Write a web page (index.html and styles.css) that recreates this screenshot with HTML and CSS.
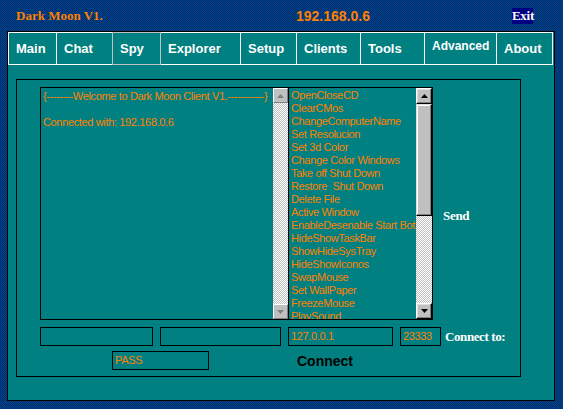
FILE: index.html
```html
<!DOCTYPE html>
<html>
<head>
<meta charset="utf-8">
<title>Dark Moon V1.</title>
<link rel="stylesheet" href="styles.css">
</head>
<body>
<div class="titlebar">
  <div class="app-title">Dark Moon V1.</div>
  <div class="app-ip">192.168.0.6</div>
  <div class="exit">Exit</div>
</div>
<div class="panel">
  <div class="tabs">
    <div class="tab w49">Main</div>
    <div class="tab w57">Chat</div>
    <div class="tab w49 tab-focus">Spy</div>
    <div class="tab w81">Explorer</div>
    <div class="tab w57">Setup</div>
    <div class="tab w65">Clients</div>
    <div class="tab w65">Tools</div>
    <div class="tab w73 tab-small">Advanced</div>
    <div class="tab w57">About</div>
  </div>
  <div class="group">
    <div class="row-main">
      <div class="textbox">
        <div class="textbox-body">
          <div class="line">{--------Welcome to Dark Moon Client V1.-----------}</div>
          <div class="line gap">Connected with: 192.168.0.6</div>
        </div>
        <div class="scroll scroll-disabled">
          <div class="sbtn"><svg width="7" height="4" viewBox="0 0 7 4"><polygon points="3.5,0 7,4 0,4" fill="#808080"/></svg></div>
          <div class="track"></div>
          <div class="sbtn"><svg width="7" height="4" viewBox="0 0 7 4"><polygon points="0,0 7,0 3.5,4" fill="#808080"/></svg></div>
        </div>
      </div>
      <div class="listbox">
        <div class="list-items">
          <div class="item">OpenCloseCD</div>
          <div class="item">ClearCMos</div>
          <div class="item">ChangeComputerName</div>
          <div class="item">Set Resolucion</div>
          <div class="item">Set 3d Color</div>
          <div class="item">Change Color Windows</div>
          <div class="item">Take off Shut Down</div>
          <div class="item">Restore&nbsp; Shut Down</div>
          <div class="item">Delete File</div>
          <div class="item">Active Window</div>
          <div class="item">EnableDesenable Start Botton</div>
          <div class="item">HideShowTaskBar</div>
          <div class="item">ShowHideSysTray</div>
          <div class="item">HideShowIconos</div>
          <div class="item">SwapMouse</div>
          <div class="item">Set WallPaper</div>
          <div class="item">FreezeMouse</div>
          <div class="item">PlaySound</div>
        </div>
        <div class="scroll scroll-list">
          <div class="sbtn sbtn16"><svg width="7" height="4" viewBox="0 0 7 4"><polygon points="3.5,0 7,4 0,4" fill="#000"/></svg></div>
          <div class="thumb"></div>
          <div class="track"></div>
          <div class="sbtn sbtn16"><svg width="7" height="4" viewBox="0 0 7 4"><polygon points="0,0 7,0 3.5,4" fill="#000"/></svg></div>
        </div>
      </div>
      <div class="send">Send</div>
    </div>
    <div class="row-inputs">
      <div class="field w113"></div>
      <div class="field w121"></div>
      <div class="field w105">127.0.0.1</div>
      <div class="field w41">23333</div>
      <div class="connect-to">Connect to:</div>
    </div>
    <div class="row-pass">
      <div class="field w97 pass">PASS</div>
      <div class="connect">Connect</div>
    </div>
  </div>
</div>
</body>
</html>
```
FILE: styles.css
```css
* { box-sizing: border-box; }
html, body { margin: 0; padding: 0; }
body {
  width: 563px;
  height: 409px;
  overflow: hidden;
  background: repeating-conic-gradient(#00418a 0 25%, #002f6e 0 50%) 0 0 / 2px 2px;
  font-family: "Liberation Sans", Arial, sans-serif;
}
.titlebar {
  height: 31px;
  display: flex;
  align-items: center;
  padding-left: 16px;
}
.app-title {
  width: 280px;
  font-family: "Liberation Serif", "Times New Roman", serif;
  font-weight: bold;
  font-size: 13px;
  color: #ff8000;
}
.app-ip {
  width: 216px;
  font-weight: bold;
  font-size: 14px;
  color: #ff8000;
}
.exit {
  width: 21px;
  height: 16px;
  background: #000080;
  color: #fff;
  font-family: "Liberation Serif", "Times New Roman", serif;
  font-weight: bold;
  font-size: 13px;
  line-height: 16px;
  text-align: center;
  letter-spacing: -0.3px;
}
.panel {
  margin-left: 7px;
  width: 548px;
  height: 370px;
  background: #008080;
  border: 1px solid #000;
}
.tabs {
  display: flex;
  height: 33px;
}
.tab {
  height: 33px;
  border: 1px solid #fff;
  margin-left: -1px;
  padding-left: 7px;
  color: #fff;
  font-weight: bold;
  font-size: 13px;
  line-height: 31px;
  white-space: nowrap;
}
.tab:first-child { margin-left: 0; }
.tab-focus {
  border-color: #c0c0c0;
  position: relative;
  z-index: 1;
}
.tab-small {
  font-size: 12px;
  line-height: 27px;
}
.w49 { width: 49px; }
.w57 { width: 57px; }
.w65 { width: 65px; }
.w73 { width: 73px; }
.w81 { width: 81px; }
.w113 { width: 113px; }
.w121 { width: 121px; }
.w105 { width: 105px; }
.w41 { width: 41px; }
.w97 { width: 97px; }

.group {
  margin: 14px 0 0 8px;
  width: 505px;
  height: 298px;
  border: 1px solid #000;
  padding: 7px 0 0 23px;
}
.row-main {
  display: flex;
  height: 233px;
}
.textbox {
  width: 249px;
  height: 233px;
  border: 1px solid #000;
  display: flex;
}
.textbox-body {
  flex: 1;
  padding: 2px 0 0 2px;
  color: #ff8000;
  font-size: 11px;
  line-height: 13px;
  letter-spacing: -0.35px;
  white-space: nowrap;
  overflow: hidden;
}
.line.gap { margin-top: 13px; }
.scroll {
  display: flex;
  flex-direction: column;
}
.scroll-disabled { width: 15px; }
.scroll-list { width: 16px; }
.sbtn {
  height: 15px;
  background: #c0c0c0;
  border-top: 1px solid #fff;
  border-left: 1px solid #fff;
  border-right: 1px solid #000;
  border-bottom: 1px solid #000;
  box-shadow: inset -1px -1px 0 #808080, inset 1px 1px 0 #dfdfdf;
  display: flex;
  align-items: center;
  justify-content: center;
  flex: none;
}
.sbtn16 { height: 16px; }
.scroll-disabled .sbtn {
  border-right-color: #808080;
  border-bottom-color: #808080;
  box-shadow: none;
}
.track {
  flex: 1;
  background: repeating-conic-gradient(#c0c0c0 0 25%, #ffffff 0 50%) 0 0 / 2px 2px;
}
.thumb {
  height: 112px;
  flex: none;
  background: #c0c0c0;
  border-top: 1px solid #dfdfdf;
  border-left: 1px solid #dfdfdf;
  border-right: 1px solid #000;
  border-bottom: 1px solid #000;
  box-shadow: inset -1px -1px 0 #808080, inset 1px 1px 0 #fff;
}
.listbox {
  width: 145px;
  height: 233px;
  margin-left: -1px;
  border: 1px solid #000;
  display: flex;
}
.list-items {
  flex: 1;
  overflow: hidden;
  padding: 1px 0 0 2px;
  color: #ff8000;
  font-size: 11px;
  line-height: 13px;
  letter-spacing: -0.35px;
  white-space: nowrap;
}
.send {
  margin: 122px 0 0 10px;
  color: #fff;
  font-family: "Liberation Serif", "Times New Roman", serif;
  font-weight: bold;
  font-size: 13px;
  letter-spacing: -0.3px;
  line-height: 14px;
}
.row-inputs {
  display: flex;
  align-items: center;
  gap: 7px;
  margin-top: 7px;
  height: 19px;
}
.field {
  height: 19px;
  border: 1px solid #000;
  padding-left: 2px;
  color: #ff8000;
  font-size: 11px;
  line-height: 17px;
  letter-spacing: -0.35px;
  white-space: nowrap;
  overflow: hidden;
}
.connect-to {
  margin-left: -3px;
  color: #fff;
  font-family: "Liberation Serif", "Times New Roman", serif;
  font-weight: bold;
  font-size: 13px;
  letter-spacing: -0.4px;
  white-space: nowrap;
}
.row-pass {
  display: flex;
  align-items: center;
  margin-top: 5px;
  height: 19px;
}
.pass { margin-left: 72px; }
.connect {
  margin-left: 88px;
  color: #000;
  font-weight: bold;
  font-size: 14px;
}
```
